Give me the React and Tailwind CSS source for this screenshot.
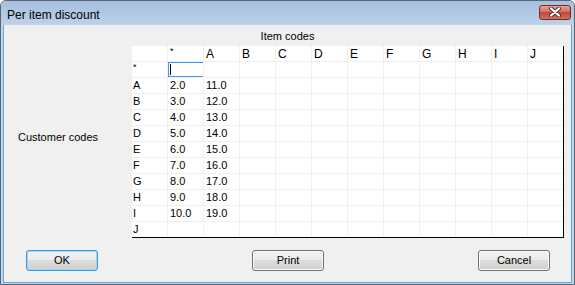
import React from "react";

const cols = ["*", "A", "B", "C", "D", "E", "F", "G", "H", "I", "J"];
const rowKeys = ["*", "A", "B", "C", "D", "E", "F", "G", "H", "I", "J"];

function valueFor(row, col) {
  const i = "ABCDEFGHI".indexOf(row);
  if (i < 0) return "";
  if (col === "*") return (i + 2).toFixed(1);
  if (col === "A") return (i + 11).toFixed(1);
  return "";
}

function Cell({ lastCol, lastRow, children, className = "" }) {
  return (
    <div
      className={
        "relative flex items-center pl-[1px] overflow-hidden bg-white border-[#f0f0f0] " +
        (lastCol ? "" : "border-r ") +
        (lastRow ? "" : "border-b ") +
        className
      }
    >
      {children}
    </div>
  );
}

function Star() {
  return <span className="self-start mt-[1px] text-[9px] leading-[9px]">*</span>;
}

function Button({ label, focused }) {
  return (
    <button
      className={
        "w-[72px] h-[21px] rounded-[3px] border text-[11px] text-black bg-[linear-gradient(#f2f2f2,#ebebeb_50%,#dddddd_50%,#cfcfcf)] " +
        (focused
          ? "border-[#3c9ad8] shadow-[inset_0_0_0_1px_#9fd8f6]"
          : "border-[#707070] shadow-[inset_0_0_0_1px_#fcfcfc]")
      }
    >
      {label}
    </button>
  );
}

export default function App() {
  return (
    <div className="w-[575px] h-[285px] flex flex-col border border-[#596573] rounded-t-[6px] bg-[#c3d6ec] px-[2px] pb-[1px] overflow-hidden font-['Liberation_Sans',Arial,sans-serif]">
      {/* title bar */}
      <div className="h-[24px] -mx-[2px] flex items-center justify-between pl-[6px] pr-[3px] bg-[linear-gradient(#a7c0de,#bcd1ea)]">
        <span className="text-[12px] text-black mt-[3px]">Per item discount</span>
        <div className="w-[32px] h-[15px] mb-[2px] rounded-[3px] border border-[#7a2a22] bg-[linear-gradient(#e6a69b,#d0675a_50%,#c0463a_50%,#cd7262)] flex items-center justify-center">
          <svg width="14" height="10" viewBox="0 0 14 10">
            <path d="M3 1.5 L11 8.5 M11 1.5 L3 8.5" stroke="#5a2a24" strokeWidth="4" strokeLinecap="round" />
            <path d="M3 1.5 L11 8.5 M11 1.5 L3 8.5" stroke="#ffffff" strokeWidth="2.2" strokeLinecap="round" />
          </svg>
        </div>
      </div>

      {/* client area */}
      <div className="flex-1 flex flex-col bg-[#f0f0f0] border-l border-r border-b border-[#5aa9e0] text-[11px] text-black">
        <div className="h-[21px] flex items-center justify-center pt-[1px]">Item codes</div>

        <div className="flex">
          <div className="w-[128px] flex items-center pl-[14px] pb-[10px]">Customer codes</div>
          <div className="grid grid-cols-[repeat(11,36px)_35px] grid-rows-[repeat(11,16px)_15px] border-r border-b border-black">
            <Cell />
            {cols.map((c, ci) => (
              <Cell key={c} lastCol={ci === cols.length - 1} className="text-[12px] pl-[2px]">
                {c === "*" ? <Star /> : c}
              </Cell>
            ))}
            {rowKeys.map((r, ri) => {
              const lastRow = ri === rowKeys.length - 1;
              return (
                <React.Fragment key={r}>
                  <Cell lastRow={lastRow}>{r === "*" ? <Star /> : r}</Cell>
                  {cols.map((c, ci) => (
                    <Cell key={c} lastRow={lastRow} lastCol={ci === cols.length - 1} className="pl-[2px]">
                      {r === "*" && c === "*" ? (
                        <>
                          <div className="absolute left-0 top-0 w-[36px] h-[15px] border border-[#3399ff]" />
                          <div className="absolute left-[2px] top-[2px] w-px h-[11px] bg-black" />
                        </>
                      ) : (
                        valueFor(r, c)
                      )}
                    </Cell>
                  ))}
                </React.Fragment>
              );
            })}
          </div>
        </div>

        <div className="flex justify-between items-start pl-[22px] pr-[21px] pt-[12px]">
          <Button label="OK" focused />
          <Button label="Print" />
          <Button label="Cancel" />
        </div>
      </div>
    </div>
  );
}
